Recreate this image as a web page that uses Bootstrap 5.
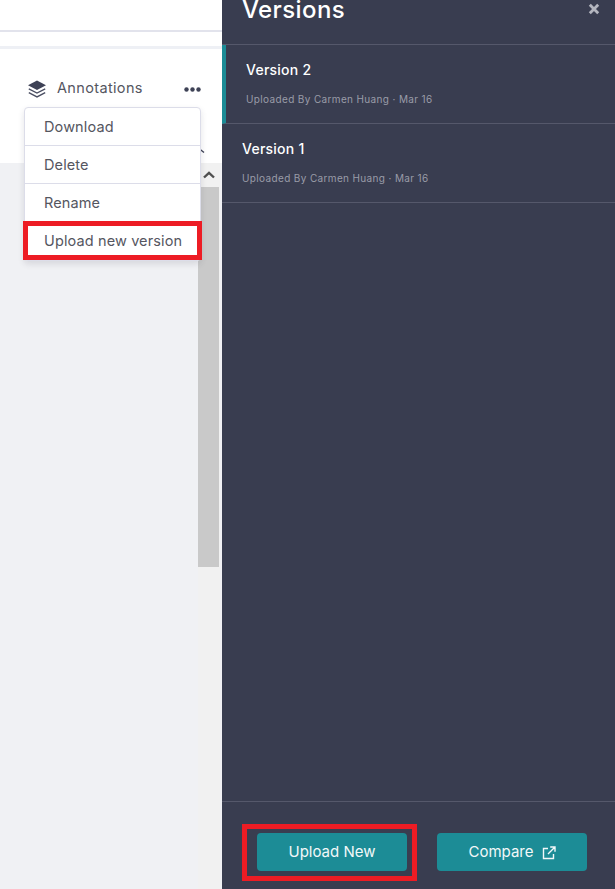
<!DOCTYPE html>
<html lang="en"><head><meta charset="utf-8"><title>Versions</title>
<link href="https://cdn.jsdelivr.net/npm/bootstrap@5.3.0/dist/css/bootstrap.min.css" rel="stylesheet">
<style>
html,body{height:889px;overflow:hidden}
body{font-family:Inter,"Open Sans","Liberation Sans",sans-serif;background:#fff;color:#4a4c57}
.shell{width:615px;height:889px}
.leftside{width:222px;position:relative}
.topbar{height:32px;border-bottom:2px solid #e2e3ec}
.subbar{height:17px;border-bottom:3px solid #eef0f5}
.headrow{height:114px;padding:29px 0 0 27px}
.annot-title{font-size:14.5px;letter-spacing:.35px;color:#55565f;margin-left:10px;position:relative;top:-1px}
.dots{margin-left:auto;margin-right:21px;position:relative;top:1px}
.greyarea{background:#f0f1f4;padding-right:2px}
.fakescroll{width:22px;background:#f1f1f1;margin-left:auto}
.arrowcell{height:24px}
.thumbbar{height:380px;background:#c9c9c9;width:21px}
.actionmenu{position:absolute;left:24px;top:107px;width:177px;background:#fff;border:1px solid #dcdde9;border-radius:4px;box-shadow:0 3px 6px rgba(60,60,80,.14);z-index:3}
.actionmenu .menuline{height:38px;padding-left:19px;font-size:14.5px;color:#55565f;border-bottom:1px solid #dcdde9;letter-spacing:.12px}
.actionmenu .menuline:last-child{border-bottom:0}
.redmark{position:absolute;border:5px solid #ed1c24;z-index:4;pointer-events:none}
.mark-menu{left:23px;top:221px;width:179px;height:39px}
.mark-btn{left:242px;top:824px;width:175px;height:57px}
.peek{position:absolute;left:198px;top:147px;z-index:2}
.darkside{width:393px;background:#393d50;color:#fff}
.drawerhead{height:45px;border-bottom:1px solid #55586b;padding-left:20px;position:relative;overflow:hidden}
.drawerhead h1{font-size:24px;font-weight:500;line-height:20px;margin:0;color:#fff;letter-spacing:.4px}
.closeglyph{position:absolute;right:15px;top:3px}
.verrow{height:79px;border-bottom:1px solid #55586b;padding:16px 0 0 20px}
.verrow.current{padding-left:20px;border-left:4px solid #1c8c96}
.vername{font-size:14px;font-weight:500;line-height:18px;color:#fff;letter-spacing:.25px}
.vermeta{font-size:10px;line-height:12px;margin-top:14px;color:#9a9ca8;letter-spacing:.36px}
.drawerfoot{border-top:1px solid #55586b;height:88px;padding:31px 0 0 35px;gap:30px}
.tealbtn{width:150px;height:38px;background:#1c8c96;border:0;border-radius:4px;color:#f2f8f9;font-size:15px;font-weight:400;padding:1px 0 0}
.tealbtn:hover{background:#1c8c96;color:#f2f8f9}
</style></head>
<body>
<div class="shell d-flex">
  <div class="leftside d-flex flex-column">
    <div class="topbar"></div>
    <div class="subbar"></div>
    <div class="headrow">
      <div class="d-flex align-items-center w-100">
        <svg width="20" height="20" viewBox="0 0 20 20" fill="none"><path d="M10 1.5 19 6.2 10 10.9 1 6.2Z" fill="#3e4256"/><path d="M1.8 9.8 10 14l8.2-4.2M1.8 13.6 10 17.9l8.2-4.3" stroke="#4a4e62" stroke-width="1.3"/></svg>
        <span class="annot-title">Annotations</span>
        <svg class="dots" width="17" height="5" viewBox="0 0 17 5" fill="#3e4256"><circle cx="2.5" cy="2.5" r="2.2"/><circle cx="8.5" cy="2.5" r="2.2"/><circle cx="14.5" cy="2.5" r="2.2"/></svg>
      </div>
    </div>
    <div class="greyarea flex-grow-1 d-flex">
      <div class="fakescroll d-flex flex-column">
        <div class="arrowcell d-flex align-items-center justify-content-center">
          <svg width="12" height="8" viewBox="0 0 12 8" fill="none"><path d="M1 6.5 6 1.8l5 4.7" stroke="#505050" stroke-width="2.4"/></svg>
        </div>
        <div class="thumbbar"></div>
      </div>
    </div>
    <svg class="peek" width="8" height="7" viewBox="0 0 8 7" fill="none"><path d="M1 1.5 6 5.5" stroke="#3e4256" stroke-width="1.5"/></svg>
    <div class="actionmenu">
      <div class="menuline d-flex align-items-center">Download</div>
      <div class="menuline d-flex align-items-center">Delete</div>
      <div class="menuline d-flex align-items-center">Rename</div>
      <div class="menuline d-flex align-items-center">Upload new version</div>
    </div>
    <div class="redmark mark-menu"></div>
  </div>
  <div class="darkside d-flex flex-column">
    <div class="drawerhead">
      <h1>Versions</h1>
      <svg class="closeglyph" width="12" height="12" viewBox="0 0 12 12" fill="none"><path d="M1.8 1.8 10.2 10.2M10.2 1.8 1.8 10.2" stroke="#b4b6bf" stroke-width="2.8"/></svg>
    </div>
    <div class="verrow current">
      <div class="vername">Version 2</div>
      <div class="vermeta">Uploaded By Carmen Huang · Mar 16</div>
    </div>
    <div class="verrow">
      <div class="vername">Version 1</div>
      <div class="vermeta">Uploaded By Carmen Huang · Mar 16</div>
    </div>
    <div class="flex-grow-1"></div>
    <div class="drawerfoot d-flex">
      <button type="button" class="btn tealbtn">Upload New</button>
      <button type="button" class="btn tealbtn d-flex align-items-center justify-content-center gap-2">Compare
        <svg width="14" height="14" viewBox="0 0 14 14" fill="none" stroke="#f2f8f9" stroke-width="1.4"><path d="M6 2.5H1.5v10h10V8M8.2 1h4.8v4.8M13 1 6 8"/></svg>
      </button>
    </div>
  </div>
</div>
<div class="redmark mark-btn"></div>
<script src="https://cdn.jsdelivr.net/npm/bootstrap@5.3.0/dist/js/bootstrap.bundle.min.js"></script>
</body></html>
